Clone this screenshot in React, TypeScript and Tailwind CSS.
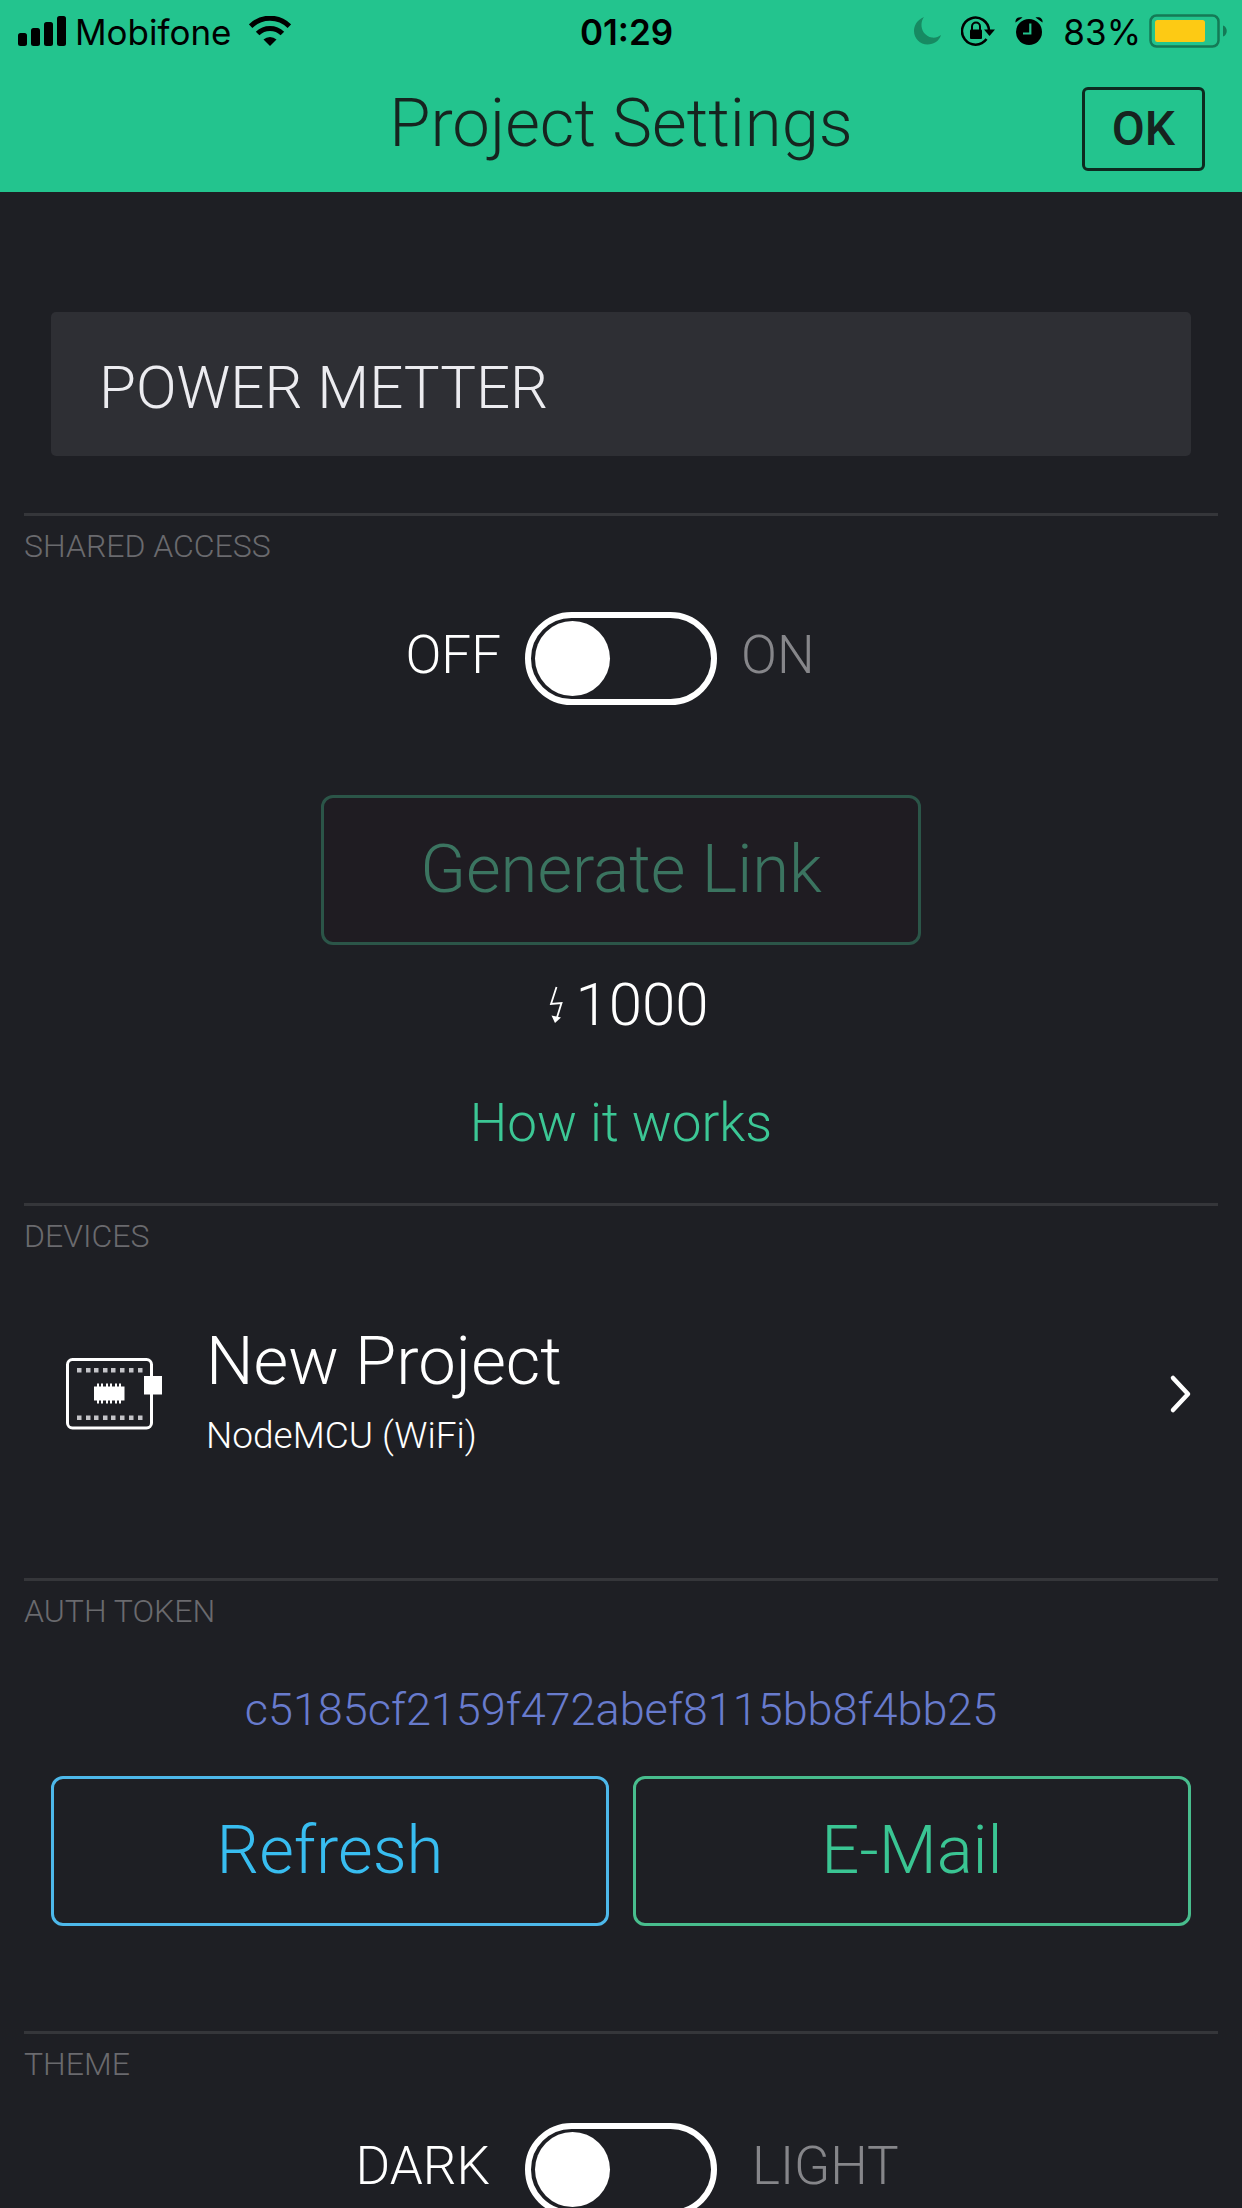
import type { ReactNode } from "react";

function SignalIcon() {
  return (
    <svg width="48" height="30" viewBox="0 0 48 30" aria-hidden="true">
      <rect x="0" y="17" width="9" height="13" rx="2.5" />
      <rect x="13" y="12" width="9" height="18" rx="2.5" />
      <rect x="26" y="6" width="9" height="24" rx="2.5" />
      <rect x="39" y="0" width="9" height="30" rx="2.5" />
    </svg>
  );
}

function WifiIcon() {
  return (
    <svg width="42" height="30" viewBox="0 0 42 30" aria-hidden="true">
      <g fill="none" stroke="black" strokeWidth="5">
        <path d="M1.6 10.2 A27.5 27.5 0 0 1 40.4 10.2" />
        <path d="M8.6 17.6 A17.6 17.6 0 0 1 33.4 17.6" />
      </g>
      <path d="M14.5 23.6 A9.4 9.4 0 0 1 27.5 23.6 L21 30 Z" />
    </svg>
  );
}

function MoonIcon() {
  return (
    <svg width="27" height="28" viewBox="0 0 27 28" fill="#178a62" aria-hidden="true">
      <path d="M10 0 C3 3 0 8.500 0 14 C0 21.500 6 27.500 13.500 27.500 C20 27.500 25 24 27 18 C24.500 20 21 21 18 20.500 C11 19.500 7 13 7.500 7 C7.700 4 8.500 2 10 0 Z" />
    </svg>
  );
}

function RotationLockIcon() {
  return (
    <svg width="34" height="31" viewBox="0 0 34 31" aria-hidden="true">
      <path d="M28 14.500 A13.500 13.500 0 1 0 25.500 23" fill="none" stroke="black" strokeWidth="2.500" />
      <path d="M23 13.500 H34 L28.500 20 Z" />
      <rect x="9" y="13.500" width="12" height="9.500" rx="1" />
      <path d="M11 14 V10.500 A4 4 0 0 1 19 10.500 V14" fill="none" stroke="black" strokeWidth="2" />
    </svg>
  );
}

function AlarmIcon() {
  return (
    <svg width="28" height="30" viewBox="0 0 28 30" aria-hidden="true">
      <circle cx="14" cy="16" r="13" />
      <path d="M0.500 6.500 C0 2.500 3 0.500 7.500 1.500 Z" />
      <path d="M27.500 6.500 C28 2.500 25 0.500 20.500 1.500 Z" />
      <path d="M15.300 7.500 V17.500 H8" fill="none" stroke="#23c48e" strokeWidth="2.200" />
    </svg>
  );
}

function BatteryIcon() {
  return (
    <svg width="78" height="34" viewBox="0 0 78 34" aria-hidden="true">
      <rect x="1.500" y="1.500" width="68" height="31" rx="6" fill="none" stroke="#147a56" strokeWidth="2.500" />
      <rect x="6" y="6" width="50" height="22" rx="2.500" fill="#fdca14" />
      <path d="M74 11.500 C79 13 79 21 74 22.500 Z" fill="#147a56" />
    </svg>
  );
}

function BoltIcon() {
  return (
    <svg width="14" height="38" viewBox="0 0 14 38" aria-hidden="true">
      <path d="M7.500 1 L2 18 L12.500 17 L7.500 33" fill="none" stroke="white" strokeWidth="1.800" />
      <path d="M2.500 29.500 L6 37 L12 31.500 Z" fill="white" />
    </svg>
  );
}

const dots = [11, 20, 28, 37, 45, 54, 63, 72];
const pins = [31, 35, 40, 44, 49, 53];

function BoardIcon() {
  return (
    <svg width="96" height="72" viewBox="0 0 96 72" aria-hidden="true" className="shrink-0">
      <rect x="1.500" y="1.500" width="84" height="68.500" rx="5" fill="none" stroke="white" strokeWidth="3" />
      {dots.map((x) => (
        <g key={x} fill="#c4c4c8">
          <rect x={x} y="10" width="4.500" height="4.500" />
          <rect x={x} y="57.500" width="4.500" height="4.500" />
        </g>
      ))}
      <rect x="28" y="28.500" width="30.500" height="14" fill="white" />
      {pins.map((x) => (
        <rect key={x} x={x} y="25.500" width="2" height="20" fill="white" />
      ))}
      <rect x="78" y="18" width="18" height="18.500" fill="white" />
    </svg>
  );
}

function ChevronIcon() {
  return (
    <svg width="24" height="40" viewBox="0 0 24 40" fill="none" aria-hidden="true" className="ml-auto shrink-0">
      <path d="M5 4 L20 20 L5 36" stroke="white" strokeWidth="4.500" strokeLinecap="round" strokeLinejoin="round" />
    </svg>
  );
}

function StatusBar() {
  return (
    <div className="grid h-[62px] grid-cols-[1fr_auto_1fr] items-center pr-[15px] pb-0.5 pl-[18px] font-[Inter,sans-serif] text-[35px] leading-[60px] font-normal text-black">
      <div className="flex items-center gap-[9px]">
        <SignalIcon />
        <span className="pt-0.5">Mobifone</span>
        <span className="pl-2">
          <WifiIcon />
        </span>
      </div>
      <span className="pt-0.5 pl-2 font-semibold">01:29</span>
      <div className="flex items-center justify-end gap-5">
        <MoonIcon />
        <RotationLockIcon />
        <AlarmIcon />
        <div className="flex items-center gap-2">
          <span className="pt-0.5">83%</span>
          <BatteryIcon />
        </div>
      </div>
    </div>
  );
}

function Section({ title, children }: { title: string; children: ReactNode }) {
  return (
    <section className="mx-6 border-t-[3px] border-[#35363a]">
      <h2 className="text-[32px] leading-[60px] text-[#6a6a6e]">{title}</h2>
      {children}
    </section>
  );
}

function Toggle({ id, off, on, gap }: { id: string; off: string; on: string; gap: string }) {
  return (
    <div className={`grid grid-cols-[1fr_auto_1fr] items-center text-[53px] leading-[62px] ${gap}`}>
      <label htmlFor={id} className="pb-2 text-right text-white">
        {off}
      </label>
      <input
        id={id}
        type="checkbox"
        role="switch"
        className="flex h-[93px] w-[192px] appearance-none items-center rounded-full border-[6px] border-white px-1 before:size-[75px] before:rounded-full before:bg-white checked:justify-end"
      />
      <label htmlFor={id} className="pb-2 text-[#86868a]">
        {on}
      </label>
    </div>
  );
}

export default function App() {
  return (
    <div className="flex h-screen flex-col bg-[#1e1f24] font-[Roboto,sans-serif] font-light">
      <header className="shrink-0 bg-[#23c48e]">
        <StatusBar />
        <div className="grid h-[130px] grid-cols-[1fr_auto_1fr] items-center px-[37px] pt-1 text-[#16241f]">
          <h1 className="col-start-2 pb-3 text-[67px] leading-[80px]">Project Settings</h1>
          <button type="button" className="h-[84px] w-[123px] justify-self-end rounded-md border-[3px] border-[#0d2a20] text-[48px] leading-[60px] font-medium">
            OK
          </button>
        </div>
      </header>

      <main className="flex-1 overflow-y-auto pt-[120px] [scrollbar-width:none]">
        <div className="mx-[51px] mb-[57px]">
          <input
            type="text"
            aria-label="Project name"
            defaultValue="POWER METTER"
            className="block h-36 w-full rounded-[5px] bg-[#2e2f34] px-12 pt-1.5 text-[60px] text-[#ececf0] outline-none"
          />
        </div>

        <Section title="SHARED ACCESS">
          <div className="flex flex-col pt-9 pb-[22px]">
            <Toggle id="shared-access" off="OFF" on="ON" gap="gap-6" />
            <button
              type="button"
              disabled
              className="mt-[90px] h-[150px] w-[600px] max-w-full self-center rounded-xl border-[3px] border-[#2b5548] bg-[#1f1c22] pb-0.5 text-[67px] text-[#3b7460]"
            >
              Generate Link
            </button>
            <p className="flex items-center justify-center gap-3 pl-4 text-[60px] leading-[120px] text-white">
              <BoltIcon />
              1000
            </p>
            <a href="#how-it-works" className="self-center text-[53px] leading-[116px] text-[#3cc795]">
              How it works
            </a>
          </div>
        </Section>

        <Section title="DEVICES">
          <button type="button" className="mt-[53px] mb-[109px] flex w-full items-center gap-11 pr-[26px] pl-[42px] text-left text-white">
            <BoardIcon />
            <span className="flex flex-col">
              <span className="text-[67px] leading-[84px]">New Project</span>
              <span className="text-[37px] leading-[66px]">NodeMCU (WiFi)</span>
            </span>
            <ChevronIcon />
          </button>
        </Section>

        <Section title="AUTH TOKEN">
          <p className="pt-[30px] text-center text-[45px] leading-[78px] text-[#687bcd]">c5185cf2159f472abef8115bb8f4bb25</p>
          <div className="mt-[27px] mb-[105px] grid grid-cols-2 gap-6 px-[27px] text-[67px]">
            <button type="button" className="h-[150px] rounded-xl border-[3px] border-[#4db8ea] pb-0.5 text-[#38bdf0]">
              Refresh
            </button>
            <button type="button" className="h-[150px] rounded-xl border-[3px] border-[#48bd8d] pb-0.5 text-[#3ac593]">
              E-Mail
            </button>
          </div>
        </Section>

        <Section title="THEME">
          <div className="pt-[29px] pb-9">
            <Toggle id="theme" off="DARK" on="LIGHT" gap="gap-[35px]" />
          </div>
        </Section>
      </main>
    </div>
  );
}
